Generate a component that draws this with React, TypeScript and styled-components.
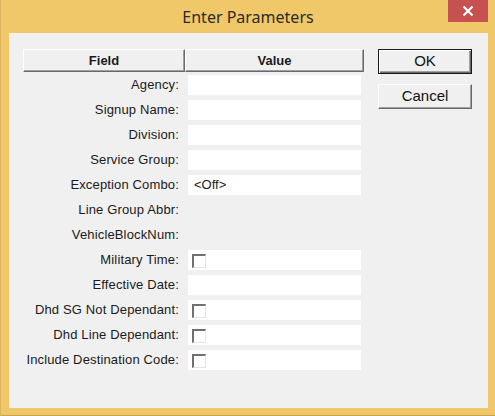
import * as React from "react";
import styled, { createGlobalStyle } from "styled-components";

const fields: { label: string; kind: "text" | "none" | "check"; value?: string }[] = [
  { label: "Agency:", kind: "text" },
  { label: "Signup Name:", kind: "text" },
  { label: "Division:", kind: "text" },
  { label: "Service Group:", kind: "text" },
  { label: "Exception Combo:", kind: "text", value: "<Off>" },
  { label: "Line Group Abbr:", kind: "none" },
  { label: "VehicleBlockNum:", kind: "none" },
  { label: "Military Time:", kind: "check" },
  { label: "Effective Date:", kind: "text" },
  { label: "Dhd SG Not Dependant:", kind: "check" },
  { label: "Dhd Line Dependant:", kind: "check" },
  { label: "Include Destination Code:", kind: "check" },
];

export default function App() {
  return (
    <>
      <GlobalStyle />
      <Frame>
        <TitleBar>
          <span />
          <Title>Enter Parameters</Title>
          <CloseButton>
            <svg width="12" height="12" viewBox="0 0 12 12">
              <path d="M1.5 1.5 L10.5 10.5 M10.5 1.5 L1.5 10.5" stroke="#fff" strokeWidth="2.2" />
            </svg>
          </CloseButton>
        </TitleBar>
        <Body>
          <Panel>
            <Header>
              <HeaderCell>Field</HeaderCell>
              <HeaderCell>Value</HeaderCell>
            </Header>
            <Rows>
              {fields.map((f) => (
                <Row key={f.label}>
                  <Label>{f.label}</Label>
                  <ValueCell>
                    {f.kind !== "none" && (
                      <Input>{f.kind === "check" ? <CheckBox /> : f.value}</Input>
                    )}
                  </ValueCell>
                </Row>
              ))}
            </Rows>
          </Panel>
          <Buttons>
            <DialogButton $isDefault>OK</DialogButton>
            <DialogButton>Cancel</DialogButton>
          </Buttons>
        </Body>
      </Frame>
    </>
  );
}

const GlobalStyle = createGlobalStyle`
  html, body {
    margin: 0;
    padding: 0;
    background: #f0c869;
  }
`;

const Frame = styled.div`
  width: 495px;
  height: 416px;
  box-sizing: border-box;
  background: #f0c869;
  padding: 0 7px 7px 8px;
  border-bottom: 1px solid #c9a455;
  border-left: 1px solid #dcb45e;
  display: flex;
  flex-direction: column;
`;

const TitleBar = styled.div`
  height: 33px;
  margin-left: -1px;
  display: grid;
  grid-template-columns: 1fr auto 1fr;
  align-items: start;
`;

const Title = styled.div`
  font-family: "Noto Sans", "Open Sans", sans-serif;
  font-size: 16px;
  color: #2b2b2b;
  line-height: 20px;
  padding-top: 7px;
`;

const CloseButton = styled.div`
  justify-self: end;
  width: 40px;
  height: 22px;
  background: #c75050;
  display: flex;
  align-items: center;
  justify-content: center;
`;

const Body = styled.div`
  flex: 1;
  background: #f0f0f0;
  display: flex;
  padding: 16px 0 0 14px;
  gap: 14px;
  font-family: "Liberation Sans", Arial, sans-serif;
  font-size: 13px;
  color: #1a1a1a;
`;

const Panel = styled.div`
  width: 341px;
`;

const Header = styled.div`
  display: grid;
  grid-template-columns: 162px 179px;
  height: 23px;
`;

const HeaderCell = styled.div`
  box-sizing: border-box;
  border-top: 1px solid #fff;
  border-left: 1px solid #fff;
  border-right: 1px solid #696969;
  border-bottom: 1px solid #696969;
  box-shadow: inset -1px -1px #a0a0a0;
  font-weight: bold;
  text-align: center;
  line-height: 21px;
`;

const Rows = styled.div`
  display: flex;
  flex-direction: column;
  gap: 5px;
  padding-top: 3px;
`;

const Row = styled.div`
  display: grid;
  grid-template-columns: 162px 179px;
  height: 20px;
`;

const Label = styled.div`
  text-align: right;
  padding-right: 6px;
  line-height: 20px;
  white-space: nowrap;
  letter-spacing: 0.15px;
`;

const ValueCell = styled.div`
  padding: 0 3px;
`;

const Input = styled.div`
  height: 20px;
  background: #fff;
  box-sizing: border-box;
  padding-left: 6px;
  line-height: 20px;
  display: flex;
  align-items: center;
`;

const CheckBox = styled.span`
  display: block;
  width: 14px;
  height: 14px;
  box-sizing: border-box;
  margin-left: -2px;
  margin-top: 1px;
  border-top: 2px solid #707070;
  border-left: 2px solid #707070;
  border-right: 1px solid #e4e4e4;
  border-bottom: 1px solid #e4e4e4;
  background: #fff;
`;

const Buttons = styled.div`
  width: 94px;
  display: flex;
  flex-direction: column;
  gap: 10px;
`;

const DialogButton = styled.div<{ $isDefault?: boolean }>`
  height: 25px;
  box-sizing: border-box;
  background: #f0f0f0;
  border: 1px solid;
  border-color: ${(p) => (p.$isDefault ? "#1a1a1a" : "#fff #696969 #696969 #fff")};
  box-shadow: ${(p) =>
    p.$isDefault
      ? "inset 1px 1px #fff, inset -1px -1px #696969, inset -2px -2px #a0a0a0"
      : "inset -1px -1px #a0a0a0"};
  font-size: 15px;
  text-align: center;
  line-height: 22px;
  color: #111;
`;
